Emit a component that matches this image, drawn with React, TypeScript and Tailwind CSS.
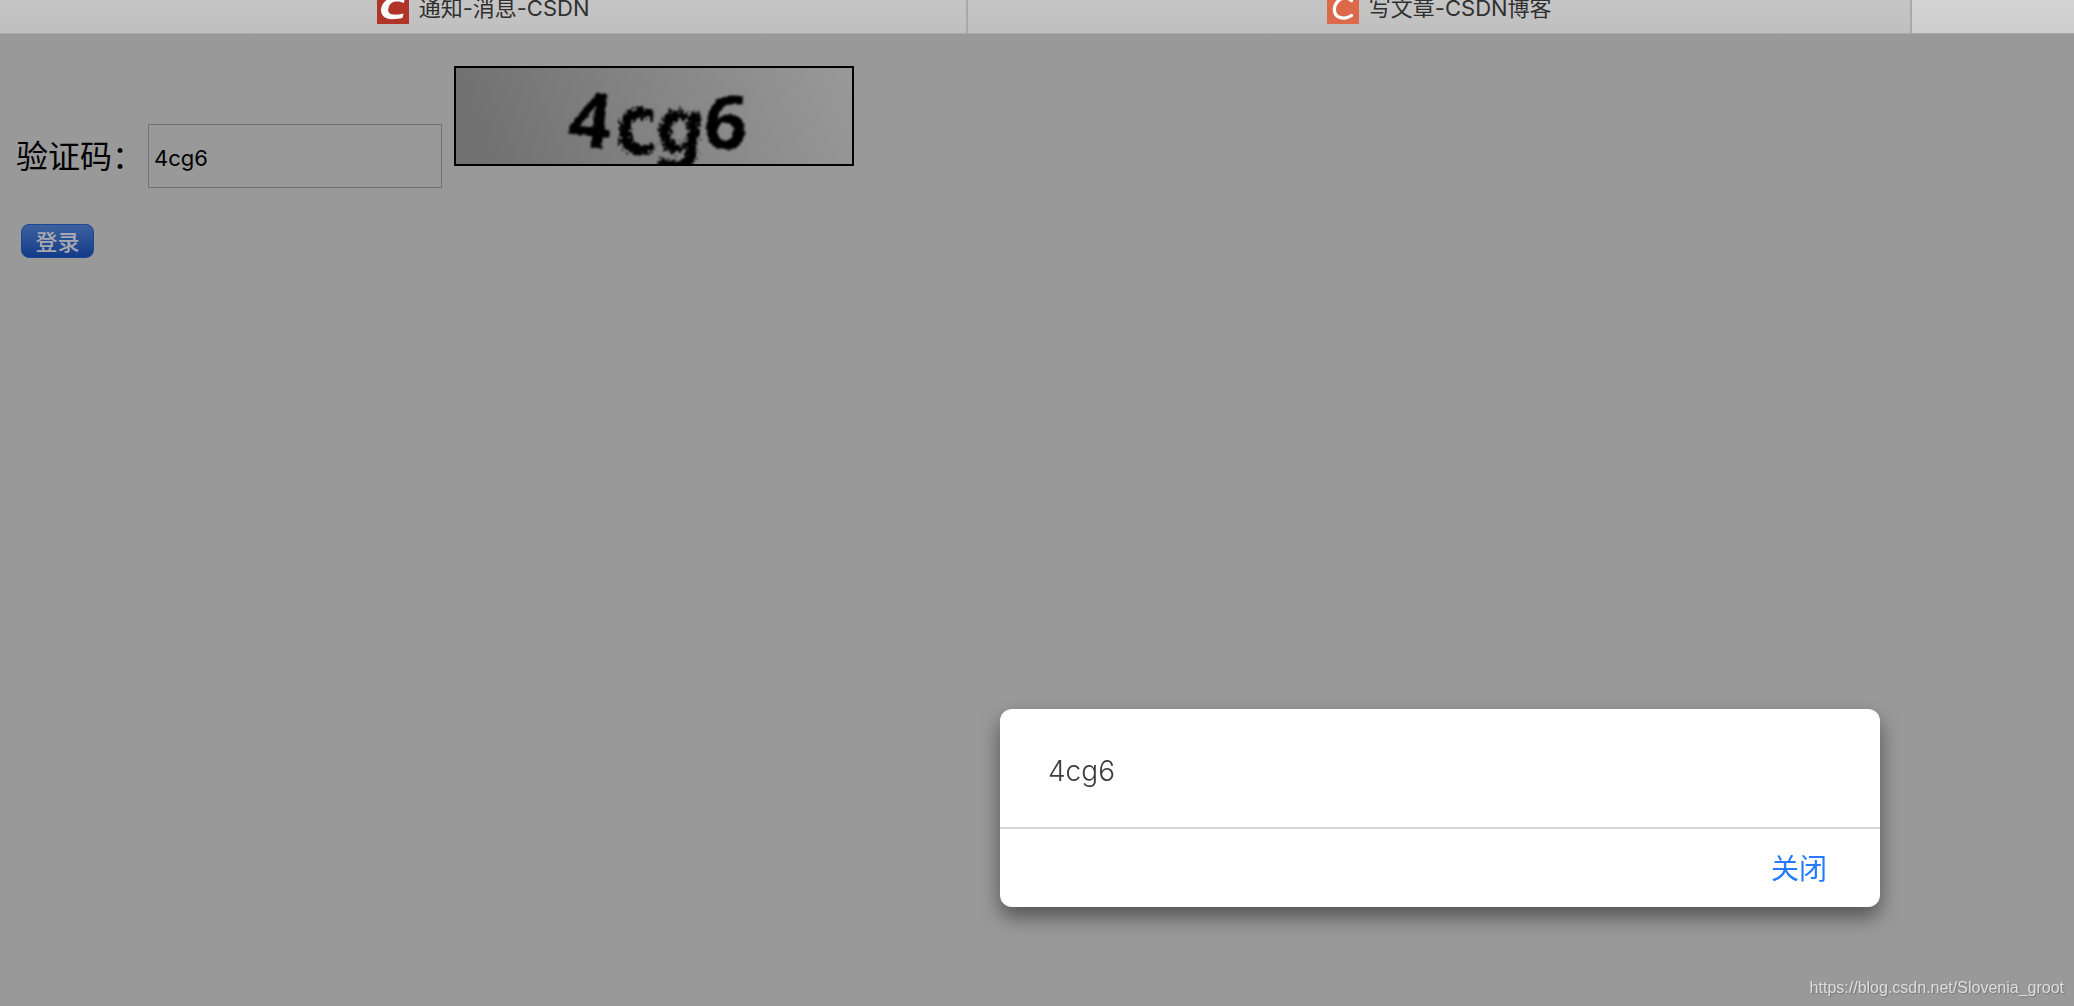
import { useState } from "react";

function NoticeIcon() {
  return (
    <svg className="h-8 w-8 shrink-0" viewBox="0 0 32 32" aria-hidden="true">
      <rect width="32" height="32" fill="#b03428" />
      <path
        d="M27.500 7C24 5 20 4.500 15.500 5.500C8.500 7 4.500 12 4 17.500C3.700 23.500 8 27.200 15 27.200C19 27.200 23 26.800 25.600 25.800L26.500 21.500C22.500 22.500 19.500 22.800 16.500 22.600C12.500 22.300 10.700 20.500 11.300 17C12 12.500 14.500 10 18.500 9.500C21.500 9.200 24.500 9.700 27 11Z"
        fill="#fff"
      />
    </svg>
  );
}

function EditorIcon() {
  return (
    <svg className="h-8 w-8 shrink-0" viewBox="0 0 32 32" aria-hidden="true">
      <rect width="32" height="32" fill="#dc6a4a" />
      <path
        d="M24.500 8.500C21.500 5.500 15 5 11 9C6.500 13.500 6 21 10.500 24.300C14.500 27 20.500 26.500 24.500 23.500"
        fill="none"
        stroke="#fff"
        strokeWidth="3.200"
        strokeLinecap="round"
      />
    </svg>
  );
}

function Captcha() {
  return (
    <svg
      className="h-[100px] w-[400px] shrink-0"
      viewBox="0 0 400 100"
      role="img"
      aria-label="验证码"
    >
      <defs>
        <linearGradient id="captcha-bg" x1="0" y1="0.100" x2="1" y2="0">
          <stop offset="0" stopColor="#717171" />
          <stop offset="0.500" stopColor="#868686" />
          <stop offset="1" stopColor="#999" />
        </linearGradient>
        <filter id="ripple" x="-20%" y="-20%" width="140%" height="140%">
          <feTurbulence type="fractalNoise" baseFrequency="0.300" numOctaves="3" seed="4" />
          <feDisplacementMap in="SourceGraphic" scale="13" xChannelSelector="R" yChannelSelector="G" />
          <feGaussianBlur stdDeviation="1" />
        </filter>
        <filter id="soft" x="-20%" y="-20%" width="140%" height="140%">
          <feTurbulence type="fractalNoise" baseFrequency="0.200" numOctaves="2" seed="2" />
          <feDisplacementMap in="SourceGraphic" scale="4" xChannelSelector="R" yChannelSelector="G" />
          <feGaussianBlur stdDeviation="1.200" />
        </filter>
      </defs>
      <rect width="400" height="100" fill="url(#captcha-bg)" />
      <g className="font-['Noto_Sans'] font-bold" fontSize="76">
        <text x="115" y="81" transform="rotate(6 136 54)" filter="url(#soft)">
          4
        </text>
        <text x="161" y="88" fontSize="82" filter="url(#ripple)">
          c
        </text>
        <text x="202" y="86" transform="rotate(5 224 66)" filter="url(#ripple)">
          g
        </text>
        <text x="250" y="83" transform="rotate(4 272 58)" filter="url(#soft)">
          6
        </text>
      </g>
      <rect x="1" y="1" width="398" height="98" fill="none" stroke="#000" strokeWidth="2" />
    </svg>
  );
}

const tab =
  "flex items-end justify-center gap-[10px] border-r-2 border-[#a9a9a9] pb-[9px] text-[22px] leading-8 text-[#303030]";

export default function App() {
  const [code, setCode] = useState("4cg6");
  const [open, setOpen] = useState(true);

  return (
    <div
      lang="zh-CN"
      className="min-h-screen bg-[#999] font-[Inter,'Noto_Sans_CJK_SC',sans-serif]"
    >
      <nav className="flex h-[34px] overflow-hidden border-b border-[#a8a8a8] bg-linear-to-b from-[#c5c5c5] to-[#bfbfbf]">
        <a href="#notice" className={`${tab} flex-[968]`}>
          <NoticeIcon />
          通知-消息-CSDN
        </a>
        <a href="#editor" className={`${tab} flex-[944]`}>
          <EditorIcon />
          写文章-CSDN博客
        </a>
        <div className="flex-[162] bg-linear-to-b from-[#d3d3d3] to-[#cdcdcd]" />
      </nav>

      <form className="px-4 pt-8" onSubmit={(e) => e.preventDefault()}>
        <div className="flex items-end">
          <label
            htmlFor="code"
            className="mr-1 font-['Liberation_Serif','Noto_Sans_CJK_SC',serif] text-[32px] leading-[62px] text-black"
          >
            验证码：
          </label>
          <input
            id="code"
            value={code}
            onChange={(e) => setCode(e.target.value)}
            className="mr-3 h-16 w-[294px] border border-[#727272] px-[5px] pt-1 text-[22px] text-black outline-none"
          />
          <div className="mb-[22px]">
            <Captcha />
          </div>
        </div>
        <button
          type="submit"
          onClick={() => setOpen(true)}
          className="mt-9 ml-[5px] flex h-[34px] w-[73px] items-center justify-center rounded-lg border border-[#1c4795] bg-linear-to-b from-[#3d619f] to-[#123a89] pt-[2px] text-[22px] font-medium text-[#a6a9b0]"
        >
          登录
        </button>
      </form>

      {open && (
        <div
          role="dialog"
          aria-label={code}
          className="fixed right-[194px] bottom-[99px] w-[880px] rounded-xl bg-white shadow-[0_10px_20px_rgba(0,0,0,0.45)]"
        >
          <p className="px-12 pt-[42px] pb-9 text-[28px] leading-10 font-light text-[#3c3c3c]">
            {code}
          </p>
          <div className="flex justify-end border-t-2 border-[#d5d5d5] px-[53px] pt-5 pb-[18px]">
            <button
              type="button"
              onClick={() => setOpen(false)}
              className="text-[28px] leading-10 text-[#267aff]"
            >
              关闭
            </button>
          </div>
        </div>
      )}

      <a
        href="#source"
        className="fixed right-[10px] bottom-[6px] font-['Liberation_Sans',sans-serif] text-base text-[#dedede] [text-shadow:1px_1px_1px_#777]"
      >
        https://blog.csdn.net/Slovenia_groot
      </a>
    </div>
  );
}
